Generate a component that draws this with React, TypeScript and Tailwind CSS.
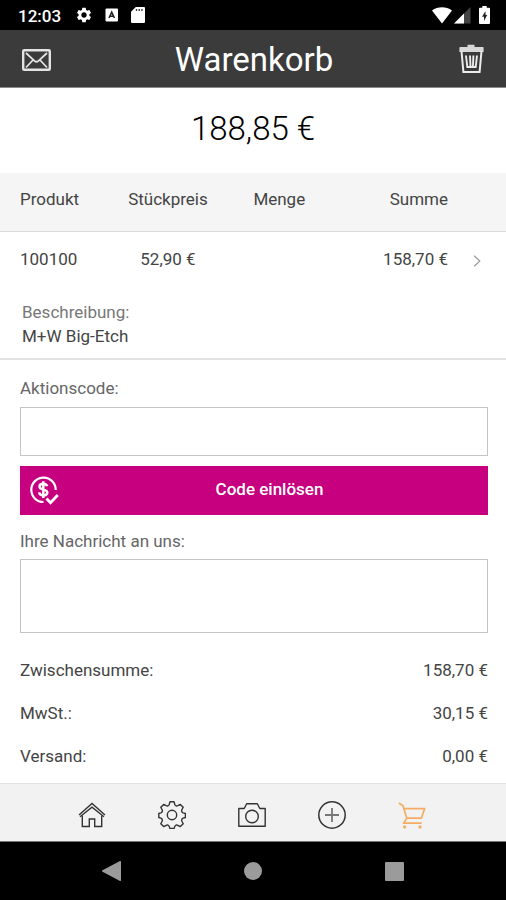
import React from 'react';
import { MdSettings } from 'react-icons/md';

type Position = {
  id: string;
  price: string;
  amount: string;
  sum: string;
  description: string;
};

const positions: Position[] = [
  { id: '100100', price: '52,90 €', amount: '', sum: '158,70 €', description: 'M+W Big-Etch' },
];

const totals = [
  { label: 'Zwischensumme:', value: '158,70 €' },
  { label: 'MwSt.:', value: '30,15 €' },
  { label: 'Versand:', value: '0,00 €' },
];

const StatusBar: React.FC = () => (
  <div className="flex h-[30px] items-center bg-black pl-[18px] pr-4 text-white">
    <span className="pt-[2px] text-[17px] leading-5 font-medium">12:03</span>
    <MdSettings className="ml-[14px] size-[18px]" />
    <svg className="ml-3 size-[14px]" viewBox="0 0 14 14" aria-hidden="true">
      <rect x="0.5" y="0.5" width="12.5" height="13" rx="1" fill="#fff" />
      <path d="M4 10 6.700 4.200 9.400 10M5 8.300h3.400" fill="none" stroke="#222" strokeWidth="1.600" />
    </svg>
    <svg className="ml-3 h-4 w-[14px]" viewBox="0 0 14 16" aria-hidden="true">
      <path d="M4.800 0H13a1 1 0 0 1 1 1v14a1 1 0 0 1-1 1H1a1 1 0 0 1-1-1V4.800z" fill="#fff" />
      <path d="M5.500 2v2M8.200 2v2M10.900 2v2" stroke="#444" strokeWidth="1.400" />
    </svg>
    <svg className="ml-auto h-[17px] w-[20px]" viewBox="0 0 20 17" aria-hidden="true">
      <path d="M0 3.500C6-.8 14-.8 20 3.500L10 16.500z" fill="#fff" />
    </svg>
    <svg className="ml-[2px] size-[17px]" viewBox="0 0 17 17" aria-hidden="true">
      <path d="M0 16.500 16.500 0v16.500z" fill="#444" />
      <path d="M0 16.500 10 6.500v10z" fill="#fff" />
    </svg>
    <svg className="ml-[8px] h-[18px] w-[11px]" viewBox="0 0 11 18" aria-hidden="true">
      <path d="M3.300 0h4.400v1.800H10a1 1 0 0 1 1 1V17a1 1 0 0 1-1 1H1a1 1 0 0 1-1-1V2.800a1 1 0 0 1 1-1h2.300z" fill="#fff" />
      <path d="M6.500 5 3 10.800h2V15l3.200-6H6.500z" fill="#222" />
    </svg>
  </div>
);

const MailIcon: React.FC = () => (
  <svg className="h-[22px] w-[29px]" viewBox="0 0 29 22" fill="none" stroke="#e4e4e4" aria-hidden="true">
    <rect x="1.200" y="1.200" width="26.600" height="19.600" rx="1" strokeWidth="2.400" />
    <path d="m4 4 8.500 7.800c1.200 1.100 2.800 1.100 4 0L25 4M4 18.500l7-7.500M25 18.500 18 11" strokeWidth="1.800" />
  </svg>
);

const TrashIcon: React.FC = () => (
  <svg className="h-[30px] w-[25px]" viewBox="0 0 25 30" fill="none" stroke="#ececec" aria-hidden="true">
    <path d="M8.500 3V.8h7V3h8.300a.8.8 0 0 1 .8.8V8H.4V3.800A.8.8 0 0 1 1.200 3z" fill="#d8d8d8" stroke="none" />
    <path d="m2.500 7 1.900 21h16.200l1.900-21" strokeWidth="2" />
    <path d="M7 11.500 8.300 23h8.400L18 11.500M11 11.500l.5 11.500M14.400 11.500l-.5 11.500" strokeWidth="1.900" />
  </svg>
);

const CoinCheckIcon: React.FC = () => (
  <svg className="size-[29px]" viewBox="0 0 29 29" fill="none" stroke="#fff" aria-hidden="true">
    <path d="M13.500 26A12.200 12.200 0 1 1 25.700 14" strokeWidth="2.200" />
    <path d="M17 10.300c-.3-1.800-1.800-2.600-3.700-2.600-2.200 0-3.800 1-3.800 2.800 0 4.200 7.800 2 7.800 6 0 1.900-1.700 2.900-4 2.900s-3.900-1-4.100-3M13.300 5.200v16.800" strokeWidth="2.500" />
    <path d="m16.500 22.500 4 4.200L27.800 19" strokeWidth="2.800" />
  </svg>
);

const HomeIcon: React.FC = () => (
  <svg className="size-7" viewBox="0 0 28 28" fill="none" stroke="currentColor" strokeWidth="1.400" aria-hidden="true">
    <path d="M1 14 14 2.500 27 14" />
    <path d="M2 15.800 14 6.200l12 9.600" strokeWidth="1.300" />
    <path d="M4.300 14.500v11h7V18h5.400v7.500h7v-11" />
  </svg>
);

const GearIcon: React.FC = () => (
  <svg className="size-7" viewBox="0 0 28 28" fill="none" stroke="currentColor" strokeWidth="1.400" strokeLinejoin="round" aria-hidden="true">
    <path d="M12 .8h4l.8 2.700c.6 1.400 1.700 1.800 3 1.200l2.500-1.300 2.900 2.900-1.300 2.500c-.6 1.300-.2 2.400 1.200 3l2.300.7v4l-2.300.7c-1.400.6-1.800 1.700-1.200 3l1.300 2.500-2.900 2.900-2.500-1.300c-1.300-.6-2.400-.2-3 1.200l-.8 1.900h-4l-.8-1.900c-.6-1.400-1.700-1.800-3-1.200l-2.500 1.300-2.900-2.900 1.300-2.500c.6-1.300.2-2.400-1.200-3L.8 16.500v-4l2.100-.7c1.400-.6 1.800-1.700 1.200-3L2.800 6.300l2.900-2.900 2.500 1.300c1.300.6 2.400.2 3-1.200z" />
    <circle cx="14" cy="14" r="4.700" />
  </svg>
);

const CameraIcon: React.FC = () => (
  <svg className="size-7" viewBox="0 0 28 28" fill="none" stroke="currentColor" strokeWidth="1.400" strokeLinejoin="round" aria-hidden="true">
    <path d="M.8 7.500h5.400L8.700 2.700h10.600l2.500 4.800h5.400v17.800H.8z" />
    <circle cx="14" cy="15.500" r="6.300" />
  </svg>
);

const PlusIcon: React.FC = () => (
  <svg className="size-7" viewBox="0 0 28 28" fill="none" stroke="currentColor" strokeWidth="1.500" aria-hidden="true">
    <circle cx="14" cy="14" r="13.200" />
    <path d="M14 7v14M7 14h14" stroke="#777" strokeWidth="1.800" />
  </svg>
);

const CartIcon: React.FC = () => (
  <svg className="size-7" viewBox="0 0 28 28" fill="none" stroke="currentColor" strokeWidth="1.700" strokeLinejoin="round" aria-hidden="true">
    <path d="M.8 2 5 4.800l3.800 12.400h14.500L26.700 7.600H5.900M8.800 17.200l-3.200 5h18" />
    <circle cx="6.700" cy="26" r="1.200" fill="currentColor" strokeWidth="1" />
    <circle cx="22" cy="26" r="1.200" fill="currentColor" strokeWidth="1" />
  </svg>
);

const tabs = [
  { label: 'Start', icon: HomeIcon, color: 'text-[#333333]' },
  { label: 'Einstellungen', icon: GearIcon, color: 'text-[#333333]' },
  { label: 'Kamera', icon: CameraIcon, color: 'text-[#333333]' },
  { label: 'Hinzufügen', icon: PlusIcon, color: 'text-[#333333]' },
  { label: 'Warenkorb', icon: CartIcon, color: 'text-[#f5ad66]' },
];

const PositionTable: React.FC = () => (
  <table className="w-full table-fixed border-collapse text-[17px] leading-5 text-[#444444]">
    <thead className="border-b border-[#dcdcdc] bg-[#f5f5f5]">
      <tr>
        <th className="w-[22%] pt-4 pb-[22px] pl-5 text-left font-normal">Produkt</th>
        <th className="w-[22%] pt-4 pb-[22px] pl-[2px] text-center font-normal">Stückpreis</th>
        <th className="w-[22%] pt-4 pb-[22px] pl-[2px] text-center font-normal">Menge</th>
        <th className="pt-4 pb-[22px] text-right font-normal">Summe</th>
        <th className="w-[58px]" />
      </tr>
    </thead>
    {positions.map((p) => (
      <tbody key={p.id} className="border-b-2 border-[#e2e2e2]">
        <tr>
          <td className="pt-[17px] pb-4 pl-5">{p.id}</td>
          <td className="pt-[17px] pb-4 pl-[2px] text-center">{p.price}</td>
          <td className="pt-[17px] pb-4 pl-[2px] text-center">{p.amount}</td>
          <td className="pt-[17px] pb-4 text-right">{p.sum}</td>
          <td className="pt-[17px] pb-4">
            <button type="button" aria-label="Position öffnen" className="mx-auto flex h-5 w-6 items-center justify-center">
              <svg className="mt-1 h-3 w-2" viewBox="0 0 8 12" fill="none" stroke="#999" strokeWidth="1.200">
                <path d="m1.200.8 5.600 5.200-5.600 5.200" />
              </svg>
            </button>
          </td>
        </tr>
        <tr>
          <td colSpan={5} className="pt-[15px] pb-[10px] pl-[22px] leading-6">
            <div className="text-[#777777]">Beschreibung:</div>
            <div>{p.description}</div>
          </td>
        </tr>
      </tbody>
    ))}
  </table>
);

const App: React.FC = () => {
  const [code, setCode] = React.useState('');
  const [message, setMessage] = React.useState('');

  return (
    <div className="min-h-screen bg-white font-['Roboto',sans-serif]">
      <StatusBar />

      <header className="flex h-[58px] items-center justify-between border-b border-[#8a8a8a] bg-[#3b3b3b] px-[22px]">
        <button type="button" aria-label="Nachrichten" className="pt-[3px]">
          <MailIcon />
        </button>
        <h1 className="pt-[2px] pr-[2px] text-[33px] leading-10 text-white">Warenkorb</h1>
        <button type="button" aria-label="Warenkorb leeren">
          <TrashIcon />
        </button>
      </header>

      <main>
        <p className="pt-[21px] pb-6 text-center text-[33px] leading-10 font-light text-black">188,85 €</p>

        <PositionTable />

        <form className="flex flex-col pt-[18px] pr-[18px] pl-5 text-[17px] leading-5" onSubmit={(e) => e.preventDefault()}>
          <label htmlFor="code" className="text-[#666666]">
            Aktionscode:
          </label>
          <input
            id="code"
            type="text"
            value={code}
            onChange={(e) => setCode(e.target.value)}
            className="mt-[9px] h-[49px] border border-[#c4c4c4] px-3 outline-none"
          />
          <button type="submit" className="mt-[10px] flex h-[49px] items-center bg-[#c6007e] pr-2 pl-[10px] font-medium text-white">
            <CoinCheckIcon />
            <span className="flex-1 pb-[3px] text-center">Code einlösen</span>
          </button>
          <label htmlFor="message" className="mt-4 text-[#666666]">
            Ihre Nachricht an uns:
          </label>
          <textarea
            id="message"
            value={message}
            onChange={(e) => setMessage(e.target.value)}
            className="mt-2 h-[74px] resize-none border border-[#c4c4c4] p-3 outline-none"
          />
        </form>

        <dl className="pt-4 pr-[18px] pb-[5px] pl-5 text-[17px] text-[#444444]">
          {totals.map((t) => (
            <div key={t.label} className="flex h-[43px] items-center justify-between">
              <dt>{t.label}</dt>
              <dd>{t.value}</dd>
            </div>
          ))}
        </dl>
      </main>

      <nav className="flex h-[59px] items-center justify-center border-t border-b border-t-[#e2e2e2] border-b-[#777777] bg-[#f2f2f2] pr-[3px]">
        {tabs.map(({ label, icon: Icon, color }) => (
          <button key={label} type="button" aria-label={label} className={`flex w-20 justify-center pt-1 ${color}`}>
            <Icon />
          </button>
        ))}
      </nav>

      <div className="flex h-[58px] items-center justify-center bg-black text-[#9b9b9b]">
        <button type="button" aria-label="Zurück" className="flex w-[28%] justify-center">
          <svg className="size-5" viewBox="0 0 20 20" fill="currentColor">
            <path d="M1.500 9.300 18.500.2a1 1 0 0 1 1.500.8v18a1 1 0 0 1-1.500.8L1.500 10.700a.8.8 0 0 1 0-1.400z" />
          </svg>
        </button>
        <button type="button" aria-label="Home" className="flex w-[28%] justify-center">
          <span className="size-[18px] rounded-full bg-[#9b9b9b]" />
        </button>
        <button type="button" aria-label="Übersicht" className="flex w-[28%] justify-center">
          <span className="size-[19px] rounded-[1px] bg-[#9b9b9b]" />
        </button>
      </div>
    </div>
  );
};

export default App;
